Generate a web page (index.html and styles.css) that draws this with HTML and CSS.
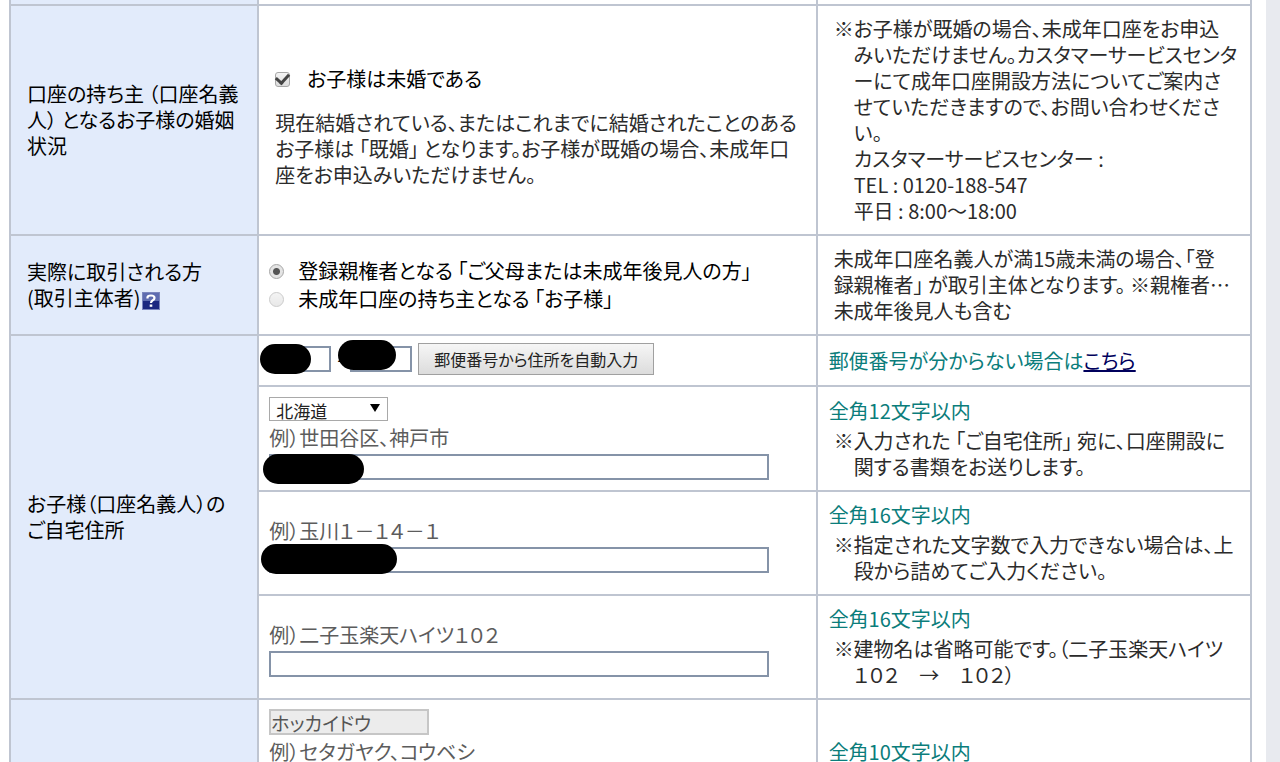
FILE: index.html
```html
<!DOCTYPE html>
<html lang="ja">
<head>
    <meta charset="UTF-8">
    <meta name="viewport" content="width=device-width, initial-scale=1.0">
    <title>未成年口座開設</title>
    <link rel="stylesheet" href="styles.css">
</head>
<body>
    <div class="page">
        <table class="form-table">
            <colgroup>
                <col class="col-head">
                <col class="col-input">
                <col class="col-note">
            </colgroup>
            <tbody>
                <tr class="spacer">
                    <th></th>
                    <td></td>
                    <td></td>
                </tr>
                <tr>
                    <th scope="row">口座の持ち主 （口座名義<br>人） となるお子様の婚姻<br>状況</th>
                    <td class="input-cell marriage">
                        <div class="check-row">
                            <input type="checkbox" id="unmarried" class="check" checked>
                            <label for="unmarried">お子様は未婚である</label>
                        </div>
                        <p class="description">現在結婚されている、またはこれまでに結婚されたことのある<br>お子様は 「既婚」 となります。お子様が既婚の場合、未成年口<br>座をお申込みいただけません。</p>
                    </td>
                    <td>
                        <p class="note hanging">※お子様が既婚の場合、未成年口座をお申込<br>みいただけません。カスタマーサービスセンタ<br>ーにて成年口座開設方法についてご案内さ<br>せていただきますので、お問い合わせくださ<br>い。<br>カスタマーサービスセンター :<br>TEL : 0120-188-547<br>平日 : 8:00～18:00</p>
                    </td>
                </tr>
                <tr>
                    <th scope="row">実際に取引される方<br>(取引主体者)<a href="#" class="help" aria-label="?"><svg width="18" height="18" viewBox="0 0 18 18"><rect width="18" height="18" fill="#7b86bd"/><path d="M1 9h16v8H1z" fill="#1c2880"/><path d="M1 1h16v8H1z" fill="#5e6cb0"/><path d="M5.5 6.500V5.500Q5.500 3.500 9 3.500Q12.500 3.500 12.500 6Q12.500 7.500 10.500 8.500Q9 9.300 9 11" fill="none" stroke="#fff" stroke-width="2.200"/><path d="M7.700 12.500h2.600v2.300H7.700z" fill="#fff"/></svg></a></th>
                    <td class="input-cell">
                        <div class="radio-row">
                            <input type="radio" name="trader" id="trader-parent" class="radio" checked>
                            <label for="trader-parent">登録親権者となる 「ご父母または未成年後見人の方」</label>
                        </div>
                        <div class="radio-row">
                            <input type="radio" name="trader" id="trader-child" class="radio" disabled>
                            <label for="trader-child">未成年口座の持ち主となる 「お子様」</label>
                        </div>
                    </td>
                    <td>
                        <p class="note">未成年口座名義人が満15歳未満の場合、「登<br>録親権者」 が取引主体となります。 ※親権者…<br>未成年後見人も含む</p>
                    </td>
                </tr>
                <tr class="zip">
                    <th scope="rowgroup" rowspan="4">お子様（口座名義人）の<br>ご自宅住所</th>
                    <td class="input-cell">
                        <div class="zip-row">
                            <span class="masked">
                                <input type="text" class="text-box zip-box" aria-label="郵便番号 上3桁">
                                <span class="mask mask-zip1"></span>
                            </span>
                            <span class="dash">-</span>
                            <span class="masked">
                                <input type="text" class="text-box zip-box" aria-label="郵便番号 下4桁">
                                <span class="mask mask-zip2"></span>
                            </span>
                            <button type="button" class="zip-button">郵便番号から住所を自動入力</button>
                        </div>
                    </td>
                    <td><p class="limit">郵便番号が分からない場合は<a href="#">こちら</a></p></td>
                </tr>
                <tr>
                    <td class="input-cell">
                        <div class="select-wrap">
                            <select class="pref" aria-label="都道府県">
                                <option>北海道</option>
                            </select>
                            <svg class="arrow" width="10" height="8" viewBox="0 0 10 8"><path d="M0 0h10L5 8z"/></svg>
                        </div>
                        <label class="example" for="city">例）世田谷区、神戸市</label>
                        <div class="masked">
                            <input type="text" id="city" class="text-box">
                            <span class="mask mask-city"></span>
                        </div>
                    </td>
                    <td>
                        <p class="limit">全角12文字以内</p>
                        <p class="note hanging">※入力された 「ご自宅住所」 宛に、口座開設に<br>関する書類をお送りします。</p>
                    </td>
                </tr>
                <tr>
                    <td class="input-cell">
                        <label class="example" for="street">例）玉川１－１４－１</label>
                        <div class="masked">
                            <input type="text" id="street" class="text-box">
                            <span class="mask mask-street"></span>
                        </div>
                    </td>
                    <td>
                        <p class="limit">全角16文字以内</p>
                        <p class="note hanging">※指定された文字数で入力できない場合は、上<br>段から詰めてご入力ください。</p>
                    </td>
                </tr>
                <tr>
                    <td class="input-cell">
                        <label class="example" for="building">例）二子玉楽天ハイツ１０２</label>
                        <div class="masked">
                            <input type="text" id="building" class="text-box">
                        </div>
                    </td>
                    <td>
                        <p class="limit">全角16文字以内</p>
                        <p class="note hanging">※建物名は省略可能です。（二子玉楽天ハイツ<br>１０２　→　１０２）</p>
                    </td>
                </tr>
                <tr class="kana">
                    <th></th>
                    <td class="input-cell">
                        <input type="text" class="pref-kana" value="ホッカイドウ" aria-label="都道府県 カナ" readonly>
                        <label class="example" for="city-kana">例）セタガヤク、コウベシ</label>
                        <div class="masked">
                            <input type="text" id="city-kana" class="text-box">
                        </div>
                    </td>
                    <td><p class="limit">全角10文字以内</p></td>
                </tr>
            </tbody>
        </table>
    </div>
</body>
</html>
```
FILE: styles.css
```css
* {
    box-sizing: border-box;
}
html {
    background-color: #e8eaef;
    overflow: hidden;
}
body {
    margin: 0;
    font-family: "Noto Sans CJK JP", sans-serif;
    font-size: 20px;
    line-height: 26px;
    font-feature-settings: "palt";
    color: #000;
}
input, select, button {
    margin: 0;
    font-family: inherit;
    font-feature-settings: inherit;
}
p {
    margin: 0;
}
.page {
    margin-right: 14px;
    padding: 0 14px 0 9px;
    background-color: #fff;
}
.form-table {
    width: 100%;
    table-layout: fixed;
    border-collapse: collapse;
}
.col-head {
    width: 20%;
}
.col-input {
    width: 45%;
}
.col-note {
    width: 35%;
}
.form-table th, .form-table td {
    padding: 10px 0 10px 11px;
    border: 2px solid #bfc5d1;
    vertical-align: middle;
    text-align: left;
    white-space: nowrap;
}
.form-table th {
    padding-left: 16px;
    background-color: #e2ebfb;
    font-weight: normal;
}
.form-table .spacer th, .form-table .spacer td {
    padding: 2px 0;
    border-top: none;
}
.form-table .input-cell {
    padding-left: 10px;
}
.form-table .marriage {
    padding-top: 24px;
    padding-left: 16px;
}
.check-row, .radio-row {
    display: flex;
    align-items: center;
}
.check-row {
    gap: 17px;
    margin-bottom: 18px;
}
.radio-row {
    gap: 14px;
    line-height: 28px;
}
.check, .radio {
    appearance: none;
    flex: none;
    width: 15px;
    height: 15px;
    border: 1px solid #a8a8a8;
    background: linear-gradient(#f4f4f4, #dcdcdc);
}
.check {
    display: grid;
    place-items: center;
    border-radius: 3px;
}
.check:checked::before {
    content: "";
    width: 10px;
    height: 6px;
    margin-bottom: 3px;
    border: solid #444;
    border-width: 0 0 3px 3px;
    transform: rotate(-48deg);
}
.radio {
    border-radius: 50%;
}
.radio:checked {
    background: radial-gradient(#555 0 3px, #e4e4e4 4px);
}
.radio:disabled {
    border-color: #ccc;
    background: linear-gradient(#f4f4f4, #e8e8e8);
}
.description, .note {
    color: #2b2b2b;
}
.note {
    margin-left: 5px;
}
.hanging {
    padding-left: 20px;
    text-indent: -20px;
}
.limit {
    color: #0b7d7b;
}
.limit + .note {
    margin-top: 4px;
}
.limit a {
    color: #00005c;
}
.help svg {
    margin-left: 1px;
    vertical-align: middle;
}
.masked {
    position: relative;
}
.text-box {
    display: block;
    width: 500px;
    max-width: 96%;
    height: 26px;
    padding: 0 4px;
    border: 2px solid #8593a8;
    background-color: #fff;
    font-size: 18px;
}
.form-table .zip td {
    padding-top: 9px;
    padding-bottom: 8px;
}
.form-table .zip .input-cell {
    padding-top: 7px;
    padding-bottom: 10px;
}
.zip-row {
    display: flex;
    align-items: center;
    gap: 6px;
}
.zip-box {
    width: 62px;
    max-width: none;
}
.zip-button {
    height: 32px;
    padding: 0 15px;
    border: 1px solid #a0a0a0;
    background: linear-gradient(#f6f6f6, #dcdcdc);
    font-size: 16px;
    color: #222;
}
.mask {
    position: absolute;
    border-radius: 15px;
    background-color: #000;
}
.mask-zip1 {
    top: -2px;
    left: -9px;
    width: 51px;
    height: 30px;
}
.mask-zip2 {
    top: -6px;
    left: -12px;
    width: 58px;
    height: 30px;
}
.mask-city {
    top: 0;
    left: -6px;
    width: 101px;
    height: 30px;
}
.mask-street {
    top: -3px;
    left: -8px;
    width: 136px;
    height: 30px;
}
.select-wrap {
    position: relative;
    width: 119px;
}
.pref {
    appearance: none;
    display: block;
    width: 100%;
    height: 24px;
    padding: 0 6px;
    border: 1px solid #a9a9a9;
    border-radius: 0;
    background-color: #fff;
    font-size: 17px;
    color: #222;
}
.arrow {
    position: absolute;
    top: 7px;
    right: 8px;
    pointer-events: none;
}
.example {
    display: block;
    padding: 4px 0 3px;
    color: #5c5c5c;
}
.pref-kana {
    display: block;
    width: 160px;
    height: 26px;
    padding: 0;
    border: 2px solid #c6c6c6;
    background-color: #ececec;
    font-size: 19px;
    color: #555;
}
.form-table .kana td {
    padding-top: 9px;
}
```
